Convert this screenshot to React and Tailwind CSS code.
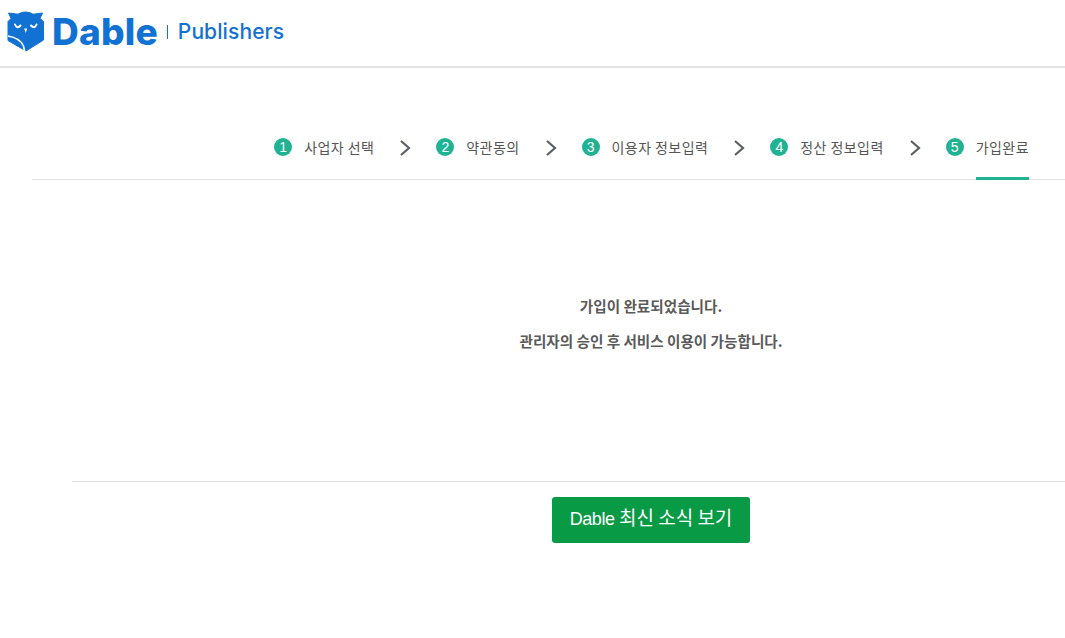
import React from 'react';

const steps = [
  { no: 1, label: '사업자 선택' },
  { no: 2, label: '약관동의' },
  { no: 3, label: '이용자 정보입력' },
  { no: 4, label: '정산 정보입력' },
  { no: 5, label: '가입완료', active: true },
];

const korean = "font-['Noto_Sans_CJK_KR',sans-serif]";

const OwlLogo = () => (
  <svg width="38" height="42" viewBox="0 0 38 42" className="shrink-0">
    <path
      d="M1.5 3 L11 4.2 Q14.5 2 18.5 2 Q23 2 26 4.2 L35.5 3 L33 8.5 L36.5 11.5 L36.5 30 L19 41 L1 30.5 L1 11.5 L4 8.5 Z"
      fill="#1272d3"
      stroke="#1272d3"
      strokeLinejoin="round"
      strokeWidth="1"
    />
    <path d="M8 14.5 Q10 19.5 13.5 15.5" fill="none" stroke="#fff" strokeWidth="2" strokeLinecap="round" />
    <path d="M24 15.5 Q27.5 19.5 29.5 14.5" fill="none" stroke="#fff" strokeWidth="2" strokeLinecap="round" />
    <path d="M17.2 18.5 L20.2 18.5 L18.7 23 Z" fill="#fff" />
    <path d="M1 26 Q13 28 16.5 36 L17.5 41" fill="none" stroke="#fff" strokeWidth="1.6" />
  </svg>
);

const Chevron = () => (
  <svg width="12" height="18" viewBox="0 0 12 18" className="mx-[25px] mt-[13px] shrink-0">
    <path d="M2 2 L10 9 L2 16" fill="none" stroke="#5c6066" strokeWidth="2.2" />
  </svg>
);

const App = () => {
  return (
    <div className={`min-h-[638px] bg-white ${korean}`}>
      {/* 상단 로고 */}
      <header className="flex h-[68px] items-start border-b-2 border-[#e2e2e2] pl-[7px] pt-[10px]">
        <OwlLogo />
        <span className="ml-[7px] font-['Inter',sans-serif] text-[37px] leading-[44px] font-extrabold tracking-[0.2px] text-[#1272d3]">
          Dable
        </span>
        <span className="ml-[9px] mt-[15px] h-[14px] w-[1px] bg-[#1272d3]" />
        <span className="ml-[10px] mt-[8px] font-['Inter',sans-serif] text-[21px] leading-[28px] font-medium tracking-[0.1px] text-[#1272d3]">
          Publishers
        </span>
      </header>

      {/* 단계 표시 */}
      <nav className="ml-[32px] mt-[58px] flex h-[54px] items-start justify-end border-b border-[#e2e2e2] pr-[36px]">
        {steps.map((step, i) => (
          <React.Fragment key={step.no}>
            {i > 0 && <Chevron />}
            <div className="flex h-[54px] items-start">
              <span className="mt-[12px] flex h-[18px] w-[18px] items-center justify-center rounded-full bg-[#1fb394] font-['Liberation_Sans',sans-serif] text-[14px] leading-none text-white">
                {step.no}
              </span>
              <span
                className={`ml-[12px] h-[54px] whitespace-nowrap pt-[9px] text-[14px] leading-[24px] tracking-[0.43px] text-[#555] ${step.active ? 'border-b-[3px] border-[#1fb394]' : ''}`}
              >
                {step.label}
              </span>
            </div>
          </React.Fragment>
        ))}
      </nav>

      {/* 완료 메시지 */}
      <section className="pl-[237px] pt-[116px] text-center text-[14.6px] leading-[20px] font-semibold text-[#5a5a5a]">
        <p>가입이 완료되었습니다.</p>
        <p className="mt-[15px]">관리자의 승인 후 서비스 이용이 가능합니다.</p>
      </section>

      <div className="ml-[72px] mt-[130px] border-t border-[#e2e2e2] pl-[165px] pt-[15px] text-center">
        <button className="h-[46px] w-[198px] rounded-[3px] bg-[#089a45] pb-[4px] text-[19px] leading-[38px] text-white">
          <span className="font-['Liberation_Sans',sans-serif] text-[18px] tracking-[-0.4px]">Dable</span> 최신 소식 보기
        </button>
      </div>
    </div>
  );
};

export default App;
